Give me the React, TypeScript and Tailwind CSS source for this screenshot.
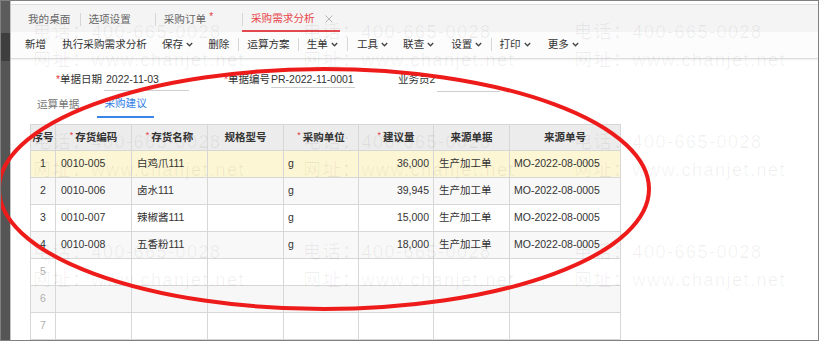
const font = "font-['Liberation_Sans','Noto_Sans_CJK_SC',sans-serif]";

function Chevron() {
  return (
    <svg width="7" height="5" viewBox="0 0 7 5" className="ml-[3px]">
      <path d="M0.8 1 L3.5 3.8 L6.2 1" fill="none" stroke="#444" strokeWidth="1.3" />
    </svg>
  );
}

function Sep({ cls }: { cls: string }) {
  return <div className={`w-px h-[13px] bg-[#d6d6d6] ${cls}`} />;
}

const cols = [
  { name: '序号', w: 'w-[25px]', req: false },
  { name: '存货编码', w: 'w-[76px]', req: true },
  { name: '存货名称', w: 'w-[76px]', req: true },
  { name: '规格型号', w: 'w-[76px]', req: false },
  { name: '采购单位', w: 'w-[75px]', req: true },
  { name: '建议量', w: 'w-[75px]', req: true },
  { name: '来源单据', w: 'w-[76px]', req: false },
  { name: '来源单号', w: 'w-[111px]', req: false },
];

const rows = [
  ['1', '0010-005', '白鸡爪111', '', 'g', '36,000', '生产加工单', 'MO-2022-08-0005'],
  ['2', '0010-006', '卤水111', '', 'g', '39,945', '生产加工单', 'MO-2022-08-0005'],
  ['3', '0010-007', '辣椒酱111', '', 'g', '15,000', '生产加工单', 'MO-2022-08-0005'],
  ['4', '0010-008', '五香粉111', '', 'g', '18,000', '生产加工单', 'MO-2022-08-0005'],
  ['5', '', '', '', '', '', '', ''],
  ['6', '', '', '', '', '', '', ''],
  ['7', '', '', '', '', '', '', ''],
];

const rowBg = ['bg-[#fdf6d4]', 'bg-[#f8f8f8]', 'bg-white', 'bg-[#f8f8f8]', 'bg-white', 'bg-[#f7f7f7]', 'bg-white'];

// watermark tiles repeat across the page
const marks = [
  { l: 'left-[32px]', t: 'top-[17px]' },
  { l: 'left-[302px]', t: 'top-[17px]' },
  { l: 'left-[573px]', t: 'top-[17px]' },
  { l: 'left-[32px]', t: 'top-[127px]' },
  { l: 'left-[302px]', t: 'top-[127px]' },
  { l: 'left-[573px]', t: 'top-[127px]' },
  { l: 'left-[32px]', t: 'top-[237px]' },
  { l: 'left-[302px]', t: 'top-[237px]' },
  { l: 'left-[573px]', t: 'top-[237px]' },
];

function Cell({ ci, val, dim }: { ci: number; val: string; dim: boolean }) {
  const w = cols[ci].w;
  let align = 'justify-start pl-[5px]';
  if (ci === 0) align = 'justify-center';
  if (ci === 4 || ci === 7) align = 'justify-start pl-[4px]';
  if (ci === 5) align = 'justify-end pr-[4px]';
  return (
    <div className={`${w} h-full shrink-0 flex items-center border-r border-[#d7d7d7] ${align} ${dim ? 'text-[#b0b0b0]' : 'text-[#333]'}`}>
      {val}
    </div>
  );
}

export default function App() {
  return (
    <div className={`w-[819px] h-[341px] relative overflow-hidden bg-white border border-[#808080] flex ${font}`}>
      {/* left dark strip */}
      <div className="w-[9px] shrink-0 flex flex-col">
        <div className="h-[32px] bg-[#5c5c5c]" />
        <div className="h-[28px] bg-[#3e3e3e]" />
        <div className="flex-1 bg-[#555]" />
      </div>

      <div className="flex-1 flex flex-col border-l border-[#c4c4c4]">
        <div className="h-[3px] bg-white" />

        {/* tab bar */}
        <div className="h-[29px] bg-[#f4f4f4] border-t border-[#dedede] flex items-stretch text-[10.6px] text-[#666] pl-[17px]">
          <div className="flex items-center pt-[3px]">我的桌面</div>
          <div className="flex items-center pt-[3px]"><Sep cls="ml-[10px]" /></div>
          <div className="flex items-center pt-[3px] ml-[7px]">选项设置</div>
          <div className="flex items-center pt-[3px]"><Sep cls="ml-[24px]" /></div>
          <div className="flex items-center pt-[3px] ml-[8px]">
            采购订单
            <span className="text-[#e5393f] ml-[3px] -mt-[6px] text-[10px]">*</span>
          </div>
          <div className="flex items-center pt-[3px]"><Sep cls="ml-[29px]" /></div>
          <div className="flex items-center pt-[3px] w-[98px] -ml-px pl-[9px] border-b-2 border-[#e24a4f] text-[#e8464b]">
            采购需求分析
            <svg width="8" height="8" viewBox="0 0 8 8" className="ml-[10px]">
              <path d="M0.5 0.5 L7.5 7.5 M7.5 0.5 L0.5 7.5" stroke="#b8b8b8" strokeWidth="1" />
            </svg>
          </div>
        </div>

        {/* toolbar */}
        <div className="h-[28px] bg-[#fcfcfc] border-b border-[#dcdcdc] shadow-[0_1px_2px_rgba(0,0,0,0.07)] flex items-center text-[10.6px] text-[#333] pl-[14px]">
          <span>新增</span>
          <span className="ml-[16px]">执行采购需求分析</span>
          <span className="ml-[15px]">保存</span><Chevron />
          <span className="ml-[15px]">删除</span>
          <Sep cls="ml-[9px]" />
          <span className="ml-[8px]">运算方案</span>
          <Sep cls="ml-[8px]" />
          <span className="ml-[8px]">生单</span><Chevron />
          <Sep cls="ml-[9px]" />
          <span className="ml-[9px]">工具</span><Chevron />
          <span className="ml-[15px]">联查</span><Chevron />
          <span className="ml-[17px]">设置</span><Chevron />
          <Sep cls="ml-[9px]" />
          <span className="ml-[7px]">打印</span><Chevron />
          <span className="ml-[17px]">更多</span><Chevron />
        </div>

        {/* form row */}
        <div className="h-[33px] flex items-start pt-[13px] text-[10.5px] text-[#333] leading-[14px]">
          <span className="w-[4px] ml-[45px] text-[#e5393f]">*</span>
          <span>单据日期</span>
          <div className="ml-[2px] w-[85px] h-[19px] border-b border-[#cfcfcf] pl-[2px]">2022-11-03</div>
          <span className="w-[4px] ml-[35px] text-[#e5393f]">*</span>
          <span>单据编号</span>
          <div className="ml-[1px] w-[84px] h-[16px] border-b border-[#cfcfcf]">PR-2022-11-0001</div>
          <span className="ml-[43px]">业务员2</span>
          <div className="ml-[2px] w-[63px] h-[20px] border-b border-[#cfcfcf]" />
        </div>

        {/* sub tabs */}
        <div className="h-[27px] flex items-stretch text-[10.6px] pl-[26px]">
          <div className="flex items-center text-[#777]">运算单据</div>
          <div className="ml-[18px] w-[57px] pl-[7px] flex items-center border-b-2 border-[#3a86e8] text-[#2f7ee6]">采购建议</div>
        </div>

        {/* table */}
        <div className="mt-[6px] ml-[19px] w-[591px] border-l border-t border-[#d7d7d7] text-[10.5px]">
          <div className="h-[26px] flex bg-[#ececec] border-b border-[#d7d7d7] font-bold text-[#333]">
            {cols.map((c) => (
              <div key={c.name} className={`${c.w} h-full shrink-0 flex items-center justify-center border-r border-[#d7d7d7]`}>
                {c.req && <span className="text-[#e5393f] font-normal text-[9px] mr-[2px] -mt-[4px]">*</span>}
                {c.name}
              </div>
            ))}
          </div>
          {rows.map((r, ri) => (
            <div key={ri} className={`h-[27px] flex border-b border-[#d7d7d7] ${rowBg[ri]}`}>
              {r.map((v, ci) => (
                <Cell key={ci} ci={ci} val={v} dim={ri > 3} />
              ))}
            </div>
          ))}
        </div>
      </div>

      {/* watermark */}
      <div className="absolute inset-0 pointer-events-none">
        {marks.map((m, i) => (
          <div key={i} className={`absolute ${m.l} ${m.t} text-[18px] leading-[28px] tracking-[1.5px] text-black/[0.06] whitespace-nowrap`}>
            <div>电话：400-665-0028</div>
            <div>网址：www.chanjet.net</div>
          </div>
        ))}
      </div>

      {/* red ellipse */}
      <svg className="absolute left-0 top-0 pointer-events-none" width="819" height="341" viewBox="0 0 819 341">
        <ellipse cx="323" cy="188" rx="325" ry="120" fill="none" stroke="#ee1b1b" strokeWidth="4" />
      </svg>
    </div>
  );
}
